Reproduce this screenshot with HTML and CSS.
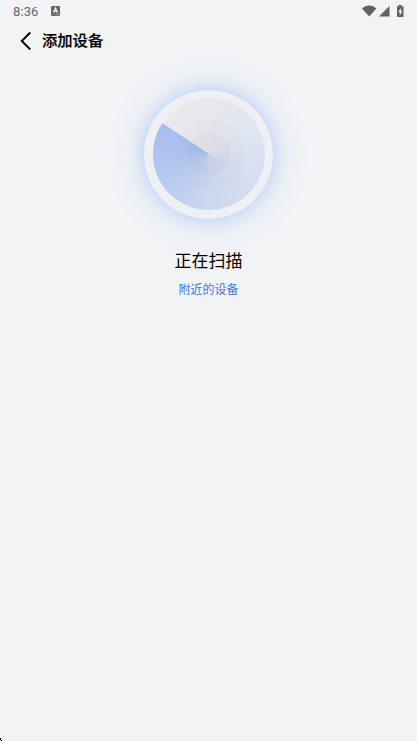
FILE: index.html
```
<!DOCTYPE html>
<html lang="zh-CN">
<head>
<meta charset="utf-8">
<title>添加设备</title>
<link rel="stylesheet" href="styles.css">
</head>
<body>
<div class="status">
  <span class="time">8:36</span>
  <svg class="badge" width="9" height="10" viewBox="0 0 9 10"><rect width="9" height="10" rx="1" fill="#66686a"/><path d="M2.4 6.6 4.5 2.2 6.6 6.6M3.2 5.2h2.6" fill="none" stroke="#f5f5f5" stroke-width="1.2"/><path d="M4.5 8.3h3.5" stroke="#b5b6b8" stroke-width=".8"/></svg>
  <svg class="system" width="43" height="14" viewBox="0 0 43 14" fill="#5f6163">
    <path d="M0 3.600C4-.4 10.400-.4 14.400 3.600L7.200 11.500Z"/>
    <path d="M17 11.500 27.500 1V11.500Z"/>
    <path d="M36.500 1.200V0h3v1.200h1.300q.7 0 .7.700v9.400q0 .700-.7.700h-5.100q-.7 0-.7-.700V1.900q0-.7.700-.700Z"/>
    <path d="M38.800 2.800 36.300 7.200h1.500v3.300l2.500-4.700h-1.500Z" fill="#f1f3f5"/>
  </svg>
</div>
<header class="header">
  <svg class="back" width="12" height="20" viewBox="0 0 12 20"><path d="M10.300 1.500 1.700 10l8.600 8.500" fill="none" stroke="#000" stroke-width="1.900"/></svg>
  <h1 class="title">添加设备</h1>
</header>
<main class="scan">
  <div class="radar"><div class="sweep"></div></div>
  <h2 class="state">正在扫描</h2>
  <p class="nearby">附近的设备</p>
</main>
<svg class="corner" width="3" height="3" viewBox="0 0 3 3"><path d="M0 0h1v2H0zM1 2h1v1H1z" fill="#111"/></svg>
</body>
</html>
```
FILE: styles.css
```
* { box-sizing: border-box; }
body {
  margin: 0;
  height: 741px;
  overflow: hidden;
  background: #f1f3f5;
  color: #000;
  font-family: Roboto, "Noto Sans CJK SC", sans-serif;
}
.status {
  display: flex;
  height: 24px;
  padding: 0 12px 0 13px;
  color: #66686a;
}
.time { width: 26px; font-size: 13px; line-height: 24px; letter-spacing: .1px; }
.badge { margin: 6px 0 0 12px; }
.system { margin: 5px 0 0 auto; }
.header {
  display: flex;
  align-items: center;
  height: 34px;
  padding-left: 20px;
}
.title {
  margin: 0 0 0 10px;
  font-size: 15.300px;
  font-weight: 500;
  -webkit-text-stroke: .2px #000;
  line-height: 34px;
}
.scan {
  display: flex;
  flex-direction: column;
  align-items: center;
  padding-top: 32px;
}
.radar {
  width: 129px;
  height: 128.500px;
  padding: 8px 9px;
  border-radius: 50%;
  background: #eef0f4;
  box-shadow: 0 0 18px rgba(130, 170, 250, .45), 0 0 34px rgba(150, 185, 250, .3);
}
.sweep {
  width: 112px;
  height: 112px;
  border-radius: 50%;
  background:
    radial-gradient(circle, rgba(145, 145, 150, .11) 21px, rgba(145, 145, 150, .045) 21.700px, rgba(145, 145, 150, .045) 35px, transparent 35.700px),
    conic-gradient(from 303.700deg at 56px 56px, #e9e9ed, #e8e8ec 55deg, #e1e6f1 110deg, #d8dff0 165deg, #cbd7f0 240deg, #b8cbf0 290deg, #a5bdf0 359.500deg, #e9e9ed 360deg);
}
.state {
  margin: 29.500px 0 0;
  font-size: 17px;
  font-weight: 400;
  line-height: 26px;
}
.nearby {
  margin: 7px 0 0;
  font-size: 12px;
  line-height: 18px;
  color: #3c76ec;
}
.corner { position: absolute; left: 0; bottom: 0; }
```
